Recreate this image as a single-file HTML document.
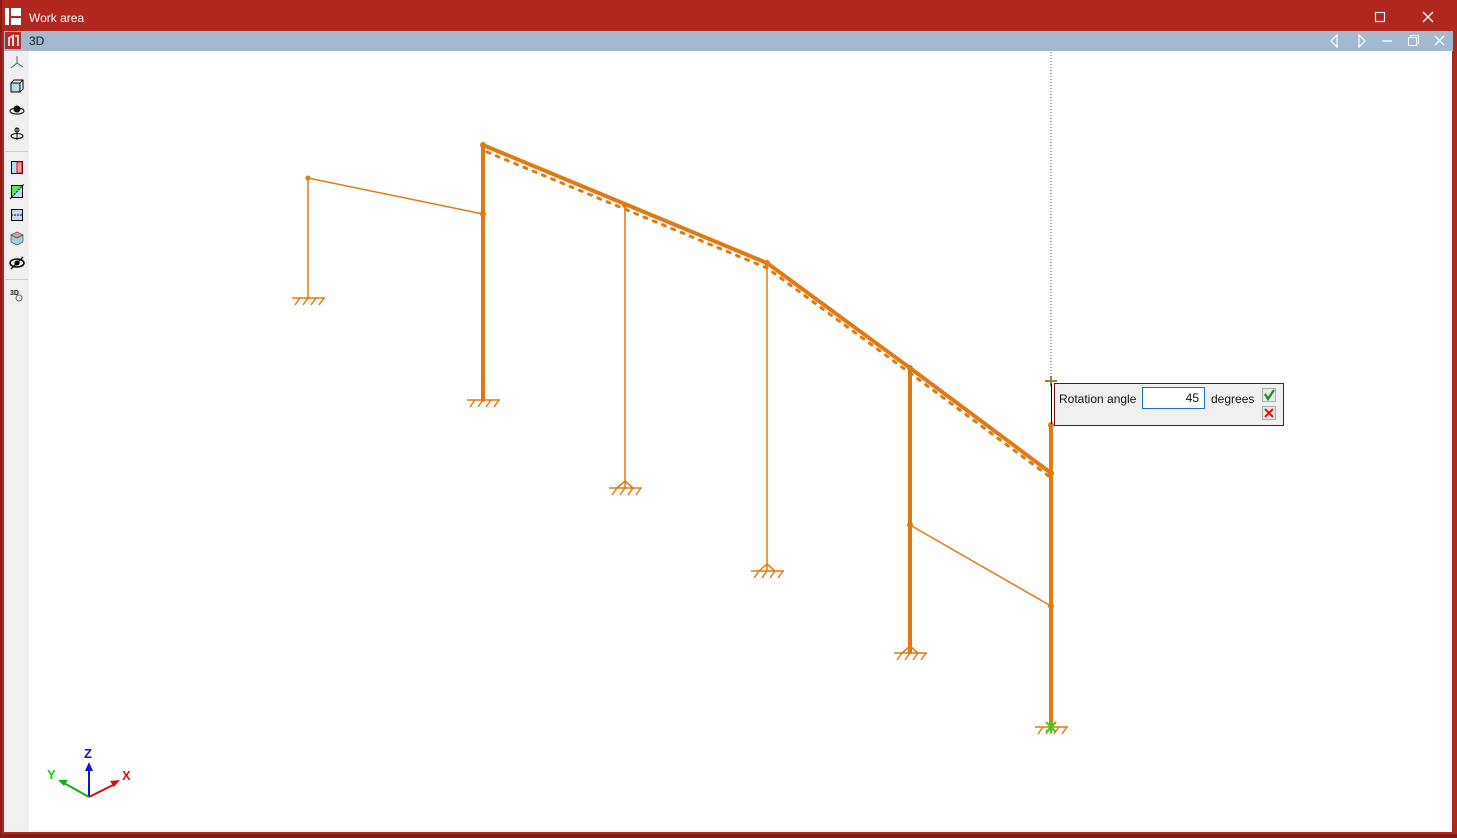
<!DOCTYPE html>
<html><head><meta charset="utf-8"><style>
html,body{margin:0;padding:0;width:1457px;height:838px;overflow:hidden;font-family:"Liberation Sans",sans-serif}
</style></head><body>
<svg width="1457" height="838" viewBox="0 0 1457 838" xmlns="http://www.w3.org/2000/svg" font-family="Liberation Sans, sans-serif">
<rect x="0" y="0" width="1457" height="838" fill="#b0271f"/>
<rect x="0" y="834" width="1457" height="4" fill="#8a1a14"/>
<rect x="0" y="0" width="2" height="838" fill="#8a1a14"/>
<!-- title bar -->
<rect x="5" y="8" width="4" height="17" fill="#fff"/>
<rect x="11" y="8" width="10" height="8" fill="#fff"/>
<rect x="11" y="18" width="10" height="7" fill="#fff"/>
<text x="29" y="22" font-size="12" fill="#fff">Work area</text>
<rect x="1375.5" y="12.5" width="9" height="9" fill="none" stroke="#fff" stroke-width="1.2"/>
<path d="M1423 12 L1433 22 M1433 12 L1423 22" stroke="#fff" stroke-width="1.3"/>
<!-- blue strip -->
<rect x="4" y="31" width="1449" height="20" fill="#a3b9ce"/>
<rect x="5" y="32" width="16" height="17" fill="#b42a2a"/>
<path d="M9 46 L9 38 L13 36 L13 46 M15 36 L18 36 L18 46" stroke="#f3d0d0" stroke-width="2" fill="none"/>
<text x="29" y="45" font-size="12" fill="#111">3D</text>
<path d="M1337 35 L1331 41 L1337 47 Z" fill="none" stroke="#fff" stroke-width="1.2"/>
<path d="M1359 35 L1365 41 L1359 47 Z" fill="none" stroke="#fff" stroke-width="1.2"/>
<path d="M1382 41 L1392 41" stroke="#fff" stroke-width="1.3"/>
<rect x="1408.5" y="37.5" width="8" height="8" fill="none" stroke="#fff"/>
<path d="M1410.5 37.5 L1410.5 35.5 L1418.5 35.5 L1418.5 43.5 L1416.5 43.5" fill="none" stroke="#fff"/>
<path d="M1435 36 L1444 45 M1444 36 L1435 45" stroke="#fff" stroke-width="1.3"/>
<!-- toolbar -->
<rect x="4" y="51" width="25" height="781" fill="#f0f0f0"/>
<path d="M17 56 L17 63 L11 68 M17 63 L23 67" stroke="#3a6a8a" fill="none"/>
<rect x="11" y="83" width="9" height="9" fill="#b8dcef" stroke="#000"/>
<path d="M11 83 L14 80 L23 80 L23 89 L20 92 M20 83 L23 80" fill="none" stroke="#000"/>
<ellipse cx="17" cy="111" rx="7" ry="3" fill="none" stroke="#000"/>
<circle cx="17" cy="109" r="3.5" fill="#000"/>
<path d="M17 128 L17 140" stroke="#000"/>
<ellipse cx="17" cy="136" rx="6" ry="2.5" fill="none" stroke="#000"/>
<circle cx="17" cy="130" r="2" fill="none" stroke="#000"/>
<rect x="5" y="151" width="23" height="1" fill="#ccc"/>
<rect x="11.5" y="161.5" width="11" height="12" fill="#b8dcef" stroke="#000"/>
<rect x="17" y="162" width="5" height="11" fill="#f4a0a0" stroke="#e00"/>
<rect x="11.5" y="185.5" width="11" height="12" fill="#b8dcef" stroke="#000"/>
<path d="M12 186 L22 186 L12 197 Z" fill="#5ee65e"/>
<path d="M10 199 L24 184" stroke="#000" stroke-dasharray="2,1"/>
<rect x="11.5" y="209.5" width="11" height="11" fill="#c8d8f0" stroke="#000"/>
<path d="M11 215 L23 215" stroke="#000" stroke-dasharray="2,1"/>
<path d="M11 235 L17 232 L23 235 L17 238 Z" fill="#e89aa0" stroke="#333" stroke-width=".6"/>
<path d="M11 235 L11 242 L17 245 L23 242 L23 235 L17 238 Z" fill="#9ad0e0" stroke="#333" stroke-width=".6"/>
<ellipse cx="17" cy="263" rx="7" ry="4" fill="none" stroke="#000" stroke-width="1.5"/>
<circle cx="17" cy="263" r="2.5" fill="#000"/>
<path d="M11 269 L23 257" stroke="#000" stroke-width="1.3"/>
<rect x="5" y="279" width="23" height="1" fill="#ccc"/>
<text x="10" y="295" font-size="7" font-weight="bold" fill="#222">3D</text>
<circle cx="19" cy="298" r="3" fill="none" stroke="#666"/>
<!-- canvas -->
<rect x="29" y="51" width="1423" height="781" fill="#fff"/>
<line x1="1051" y1="52" x2="1051" y2="380" stroke="#555" stroke-width="1" stroke-dasharray="1,2"/>
<g stroke="#e07a10" fill="none" stroke-linecap="round">
<path d="M308 178 L308 298 M308 178 L483 214" stroke-width="1.5"/>
<path d="M625 205 L625 488 M767 263 L767 571 M910 525 L1051 606" stroke-width="1.5"/>
<path d="M483 145 L483 400 M910 368 L910 652 M1051 425 L1051 727" stroke-width="4"/>
<path d="M483 145 L767 263 L910 368 L1051 473" stroke-width="4"/>
<path d="M487 152 L767 268 L910 373 L1050 477" stroke-width="3" stroke-dasharray="3,7"/>
</g>
<g fill="#e07a10">
<circle cx="308" cy="178" r="2.5"/><circle cx="483" cy="214" r="3"/><circle cx="483" cy="145" r="3"/>
<circle cx="625" cy="205" r="3"/><circle cx="767" cy="263" r="3"/><circle cx="910" cy="368" r="3"/>
<circle cx="1051" cy="473" r="3"/><circle cx="1051" cy="425" r="3"/><circle cx="910" cy="525" r="3"/><circle cx="1051" cy="606" r="3"/>
</g>
<g stroke="#e07a10" stroke-width="1.5" fill="none">
<g transform="translate(308,298)"><path d="M-16 0 L17 0 M-8 0 L-13 7 M0 0 L-5 7 M8 0 L3 7 M16 0 L11 7"/></g>
<g transform="translate(483,400)"><path d="M-16 0 L17 0 M-8 0 L-13 7 M0 0 L-5 7 M8 0 L3 7 M16 0 L11 7"/></g>
<g transform="translate(625,488)"><path d="M-8 0 L0 -7 L8 0 M-16 0 L17 0 M-8 0 L-13 7 M0 0 L-5 7 M8 0 L3 7 M16 0 L11 7"/></g>
<g transform="translate(767,571)"><path d="M-8 0 L0 -7 L8 0 M-16 0 L17 0 M-8 0 L-13 7 M0 0 L-5 7 M8 0 L3 7 M16 0 L11 7"/></g>
<g transform="translate(910,653)"><path d="M-8 0 L0 -7 L8 0 M-16 0 L17 0 M-8 0 L-13 7 M0 0 L-5 7 M8 0 L3 7 M16 0 L11 7"/></g>
<g transform="translate(1051,727)"><path d="M-16 0 L17 0 M-8 0 L-13 7 M0 0 L-5 7 M8 0 L3 7 M16 0 L11 7"/></g>
</g>
<path d="M1046 722 L1056 732 M1056 722 L1046 732 M1051 721 L1051 733" stroke="#3ad01a" stroke-width="2"/>
<!-- cursor -->
<path d="M1045 381 L1057 381 M1051 376 L1051 386" stroke="#9a8040" stroke-width="2"/>
<line x1="1051.5" y1="384" x2="1051.5" y2="424" stroke="#000"/>
<!-- dialog -->
<rect x="1054.5" y="383.5" width="229" height="42" fill="#f0f0f0" stroke="#6a1010"/>
<text x="1059" y="403" font-size="12" fill="#111">Rotation angle</text>
<rect x="1142.5" y="387.5" width="62" height="21" fill="#fff" stroke="#1a6fc8"/>
<text x="1199" y="402" font-size="12" fill="#111" text-anchor="end">45</text>
<text x="1211" y="403" font-size="12" fill="#111">degrees</text>
<rect x="1262.5" y="388.5" width="13" height="13" fill="#e8e8e8" stroke="#aaa"/>
<path d="M1265 394 L1268 399 L1274 390" stroke="#1a8a1a" stroke-width="2.2" fill="none"/>
<rect x="1262.5" y="406.5" width="13" height="13" fill="#e8e8e8" stroke="#aaa"/>
<path d="M1265 409 L1273 417 M1273 409 L1265 417" stroke="#e01010" stroke-width="2"/>
<!-- axes -->
<g stroke-width="2">
<path d="M89 797 L89 768" stroke="#1010d0"/><path d="M85 771 L89 762 L93 771 Z" fill="#1010d0"/>
<path d="M89 797 L64 783" stroke="#10b010"/><path d="M58 780 L68 780 L64 786 Z" fill="#10b010"/>
<path d="M89 797 L115 784" stroke="#d01010"/><path d="M120 780 L110 781 L114 787 Z" fill="#d01010"/>
</g>
<text x="84" y="758" font-size="13" font-weight="bold" fill="#1010d0">Z</text>
<text x="47" y="779" font-size="13" font-weight="bold" fill="#10d010">Y</text>
<text x="122" y="780" font-size="13" font-weight="bold" fill="#e01010">X</text>
</svg>
</body></html>
